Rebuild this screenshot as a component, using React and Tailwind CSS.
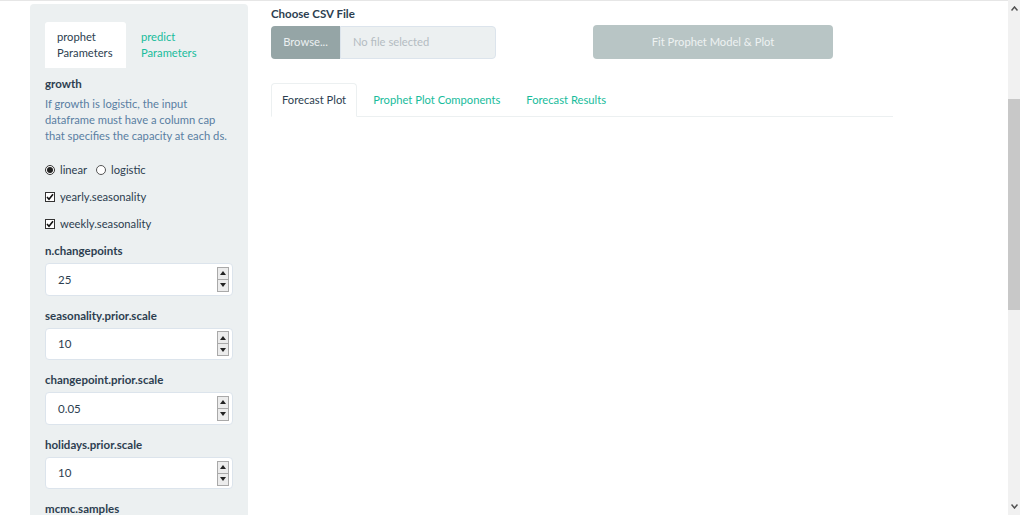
import React from "react";

const Spinner = () => (
  <div className="flex flex-col w-[12px] h-[25px] border border-[#a9a9a9] bg-[#ececec]">
    <div className="flex-1 flex items-center justify-center border-b border-[#a9a9a9]">
      <svg width="6" height="4" viewBox="0 0 6 4"><path d="M0 4 L3 0 L6 4 Z" fill="#222" /></svg>
    </div>
    <div className="flex-1 flex items-center justify-center">
      <svg width="6" height="4" viewBox="0 0 6 4"><path d="M0 0 L6 0 L3 4 Z" fill="#222" /></svg>
    </div>
  </div>
);

const NumField = ({ label, value, first }) => (
  <div className={first ? "mt-[11px]" : "mt-[12px]"}>
    <div className="text-[11.5px] leading-[16px] font-bold text-[#2c3e50]">{label}</div>
    <div className="mt-[4px] h-[32.6px] w-[188px] bg-white border border-[#dce4ec] rounded-[4px] flex items-center pl-[12px] pr-[3px]">
      <span className="flex-1 text-[11.5px] text-[#2c3e50]">{value}</span>
      <Spinner />
    </div>
  </div>
);

const Check = ({ label }) => (
  <div className="flex items-center h-[16px] mt-[11px]">
    <div className="w-[10px] h-[10px] border border-[#333] bg-white flex items-center justify-center">
      <svg width="8" height="8" viewBox="0 0 8 8"><path d="M1 4 L3 6.2 L7 1.2" stroke="#111" strokeWidth="1.6" fill="none" /></svg>
    </div>
    <span className="ml-[5px] text-[11.2px] text-[#2c3e50]">{label}</span>
  </div>
);

export default function App() {
  return (
    <div className="flex w-[1020px] h-[515px] overflow-hidden bg-white font-['Lato','Open_Sans',sans-serif]">
      <div className="flex-1 flex flex-col min-w-0">
        <div className="h-[3px] bg-[#f3f3f3] border-b border-[#e6e6e6]" />
        <div className="flex pl-[30px] pt-[3px]">
          {/* sidebar */}
          <div className="w-[218px] h-[520px] bg-[#ecf0f1] rounded-t-[4px] px-[15px] pt-[18px]">
            <div className="flex">
              <div className="w-[81px] h-[46px] bg-white rounded-t-[3px] pl-[12px] pt-[7px] text-[11.2px] leading-[16px] text-[#2c3e50]">
                <div>prophet</div>
                <div>Parameters</div>
              </div>
              <div className="pl-[15px] pt-[7px] text-[11.2px] leading-[16px] text-[#18bc9c]">
                <div>predict</div>
                <div>Parameters</div>
              </div>
            </div>
            <div className="mt-[8px] text-[11.5px] leading-[16px] font-bold text-[#2c3e50]">growth</div>
            <div className="mt-[4px] text-[11.2px] leading-[16px] text-[#597ea2] w-[190px]">
              If growth is logistic, the input dataframe must have a column cap that specifies the capacity at each ds.
            </div>
            <div className="flex items-center h-[16px] mt-[18px]">
              <div className="w-[10px] h-[10px] rounded-full border border-[#333] bg-white flex items-center justify-center">
                <div className="w-[6px] h-[6px] rounded-full bg-[#222]" />
              </div>
              <span className="ml-[5px] text-[11.2px] text-[#2c3e50]">linear</span>
              <div className="ml-[9px] w-[10px] h-[10px] rounded-full border border-[#555] bg-white" />
              <span className="ml-[5px] text-[11.2px] text-[#2c3e50]">logistic</span>
            </div>
            <Check label="yearly.seasonality" />
            <Check label="weekly.seasonality" />
            <NumField label="n.changepoints" value="25" first />
            <NumField label="seasonality.prior.scale" value="10" />
            <NumField label="changepoint.prior.scale" value="0.05" />
            <NumField label="holidays.prior.scale" value="10" />
            <div className="mt-[12px] text-[11.5px] leading-[16px] font-bold text-[#2c3e50]">mcmc.samples</div>
          </div>
          {/* main */}
          <div className="ml-[23px] w-[622px]">
            <div className="mt-[2px] text-[11.5px] leading-[16px] font-bold text-[#2c3e50]">Choose CSV File</div>
            <div className="flex items-start mt-[4px]">
              <div className="flex h-[33px] w-[225px]">
                <div className="w-[69px] bg-[#95a5a6] rounded-l-[4px] flex items-center justify-center text-[11.2px] text-[#ecf0f1]">Browse...</div>
                <div className="flex-1 bg-[#ecf0f1] border border-[#dce4ec] rounded-r-[4px] flex items-center pl-[12px] text-[11.2px] text-[#b4bcc2]">No file selected</div>
              </div>
              <div className="ml-[97px] -mt-[1px] w-[240px] h-[34px] bg-[#b8c5c5] rounded-[4px] flex items-center justify-center text-[11.2px] text-[#eef2f2]">Fit Prophet Model &amp; Plot</div>
            </div>
            <div className="mt-[24px] flex border-b border-[#ecf0f1] h-[34px]">
              <div className="h-[34px] -mb-[1px] bg-white border border-[#ecf0f1] border-b-white rounded-t-[4px] px-[10px] pt-[1px] flex items-center text-[11.2px] text-[#2c3e50]">Forecast Plot</div>
              <div className="ml-[4px] px-[12px] pt-[1px] flex items-center text-[11.2px] text-[#18bc9c]">Prophet Plot Components</div>
              <div className="ml-[2px] px-[12px] pt-[1px] flex items-center text-[11.2px] text-[#18bc9c]">Forecast Results</div>
            </div>
          </div>
        </div>
      </div>
      {/* scrollbar */}
      <div className="w-[12px] h-[515px] bg-[#f1f1f1] flex flex-col">
        <div className="h-[17px] flex items-center justify-center">
          <svg width="7" height="5" viewBox="0 0 7 5"><path d="M0.5 4.5 L3.5 1 L6.5 4.5" stroke="#505050" strokeWidth="1.5" fill="none" /></svg>
        </div>
        <div className="mt-[82px] h-[211px] bg-[#c8c8c8]" />
        <div className="flex-1" />
        <div className="h-[17px] flex items-center justify-center">
          <svg width="7" height="5" viewBox="0 0 7 5"><path d="M0.5 0.5 L3.5 4 L6.5 0.5" stroke="#505050" strokeWidth="1.5" fill="none" /></svg>
        </div>
      </div>
    </div>
  );
}
